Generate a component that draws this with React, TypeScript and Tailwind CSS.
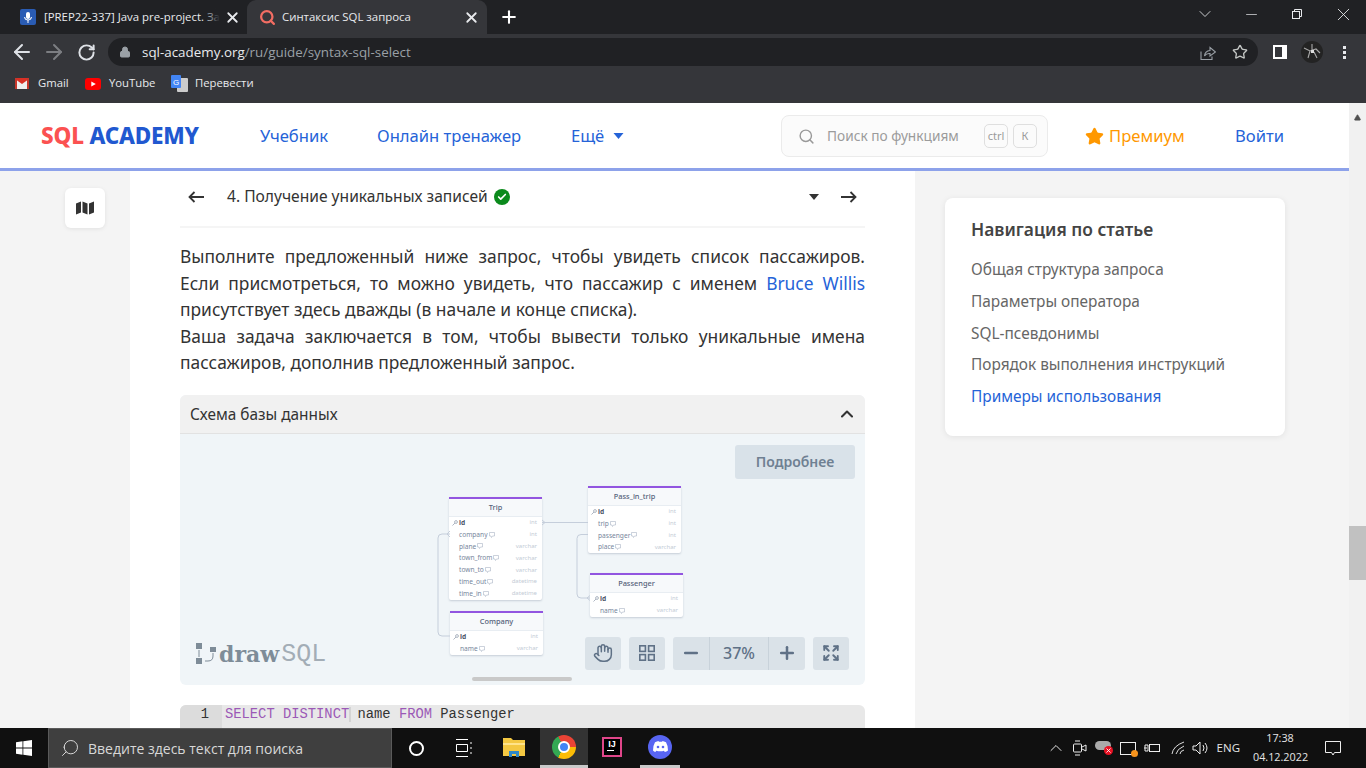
import React from "react";
import { X, Plus, ArrowLeft, ArrowRight, RotateCw, Lock, ChevronDown, Minus, Star, Search, Hand, ChevronUp, Expand, Check, Triangle } from "lucide-react";

const ui = { fontFamily: '"Open Sans","Noto Sans",sans-serif' };
const site = { fontFamily: '"Noto Sans","Open Sans",sans-serif' };

type Row = [string, string, boolean?];

function Bubble() {
  return (
    <svg width="6" height="6" viewBox="0 0 6 6" fill="none" stroke="#a9b4c4" strokeWidth="0.6" className="ml-[1px] shrink-0">
      <path d="M.5.5h5v3.500H3.500L2.500 5.500 2 4H.5z" />
    </svg>
  );
}

function Table({ name, rows, className }: { name: string; rows: Row[]; className: string }) {
  return (
    <div className={"absolute w-[93px] rounded-[2px] bg-white shadow-[0_1px_2px_rgba(100,116,139,0.3)] " + className}>
      <div className="flex h-[20px] items-center justify-center border-t-[2px] border-b border-t-[#9255e0] border-b-[#e8edf2] bg-[#f7f9fb] pt-[1px] text-[7.4px] font-medium text-[#56627a]">{name}</div>
      {rows.map(([c, t, pk]) => (
        <div key={c} className="relative flex h-[11.8px] items-center justify-between pl-[10px] pr-[5px] text-[6.6px] text-[#77869c]">
          {pk && (
            <svg width="6" height="6" viewBox="0 0 6 6" fill="none" stroke="#8b97a8" strokeWidth="0.7" className="absolute left-[3px] top-[3px]">
              <circle cx="4" cy="2" r="1.400" />
              <path d="M3 3L.5 5.500" />
            </svg>
          )}
          <span className={pk ? "flex items-center font-bold text-[#4b5568]" : "flex items-center"}>
            {c}
            {!pk && <Bubble />}
          </span>
          <span className="text-[6px] text-[#c3cbd6]">{t}</span>
        </div>
      ))}
    </div>
  );
}

function Line({ children, last }: { children: React.ReactNode; last?: boolean }) {
  return <div className={last ? "whitespace-nowrap" : "whitespace-nowrap [text-align:justify] [text-align-last:justify]"}>{children}</div>;
}

function LongArrow({ right }: { right?: boolean }) {
  return (
    <svg width="16" height="12" viewBox="0 0 16 12" fill="none" stroke="#333" strokeWidth="1.800" className={right ? "shrink-0 -scale-x-100" : "shrink-0"}>
      <path d="M1.500 6H16M6.500 1L1.500 6l5 5" />
    </svg>
  );
}

export default function App() {
  return (
    <div className="flex h-[768px] w-[1366px] flex-col overflow-hidden bg-[#f4f4f4]" style={ui}>
      {/* tab strip */}
      <div className="flex h-[34px] shrink-0 items-end bg-[#202124] pl-[8px] text-[11.4px] text-[#e8eaed]">
        <div className="flex h-[34px] w-[239px] items-center pl-[12px] pr-[6px]">
          <div className="mr-[8px] flex h-[16px] w-[16px] shrink-0 items-center justify-center rounded-[2px] bg-[#2a5cb4]">
            <svg width="10" height="11" viewBox="0 0 10 11" fill="#fff"><rect x="3" y="0" width="4" height="7" rx="2" /><path d="M1 5h1q.500 2.500 3 2.500T8 5h1q-.500 3-3.500 3.500V11h-1V8.500Q1.500 8 1 5z" /></svg>
          </div>
          <span className="relative whitespace-nowrap">
            [PREP22-337] Java pre-project. За
            <span className="absolute inset-y-0 right-0 w-[16px] bg-gradient-to-r from-transparent to-[#202124]" />
          </span>
          <X size={17} strokeWidth={2.5} className="ml-auto shrink-0" />
        </div>
        <div className="flex h-[34px] w-[240px] items-center rounded-t-[9px] bg-[#35363a] pl-[12px] pr-[7px]">
          <Search size={17} strokeWidth={3.2} className="mr-[6px] shrink-0 text-[#f26d63]" />
          <span className="whitespace-nowrap">Синтаксис SQL запроса</span>
          <X size={17} strokeWidth={2.5} className="ml-auto shrink-0" />
        </div>
        <Plus size={20} strokeWidth={2.5} className="mb-[7px] ml-[12px] text-white" />
        <div className="ml-auto flex h-[28px] self-start text-[#e8eaed]">
          <div className="flex w-[46px] items-center justify-center"><ChevronDown size={20} strokeWidth={1} /></div>
          <div className="flex w-[46px] items-center justify-center"><Minus size={17} strokeWidth={1} /></div>
          <div className="flex w-[46px] items-center justify-center">
            <svg width="10" height="10" viewBox="0 0 10 10" fill="none" stroke="currentColor"><rect x="0.5" y="2.500" width="7" height="7" /><path d="M2.500 2.500V.5h7v7h-2" /></svg>
          </div>
          <div className="flex w-[46px] items-center justify-center"><X size={21} strokeWidth={1} /></div>
        </div>
      </div>
      {/* toolbar */}
      <div className="flex h-[36px] shrink-0 items-center bg-[#35363a] pl-[6px]">
        <div className="flex w-[32px] justify-center"><ArrowLeft size={24} strokeWidth={2} className="text-[#dee1e6]" /></div>
        <div className="flex w-[32px] justify-center"><ArrowRight size={24} strokeWidth={2} className="text-[#7c7e82]" /></div>
        <div className="flex w-[32px] justify-center"><RotateCw size={19} strokeWidth={2.5} className="text-[#dee1e6]" /></div>
        <div className="ml-[6px] flex h-[28px] w-[1150px] shrink-0 items-center rounded-full bg-[#202124] pl-[11px] pr-[10px]">
          <Lock size={12} className="text-[#9aa0a6]" fill="currentColor" />
          <span className="ml-[11px] text-[13.4px] text-[#e8eaed]">sql-academy.org<span className="text-[#9aa0a6]">/ru/guide/syntax-sql-select</span></span>
          <svg width="16" height="15" viewBox="0 0 16 15" fill="none" stroke="#9aa0a6" strokeWidth="1.100" className="ml-auto">
            <path d="M1 6.500V14.500H12V11.500" />
            <path d="M4.500 11Q5 6 10 5.500V2.500L15.500 7 10 11V8.500Q6.500 8 4.500 11z" />
          </svg>
          <Star size={16} strokeWidth={2} className="ml-[16px] text-[#c4c7c5]" />
        </div>
        <div className="ml-[15px] h-[14px] w-[14px] shrink-0 border-[2px] border-r-[5px] border-white bg-[#35363a]" />
        <svg width="22" height="22" viewBox="0 0 22 22" className="ml-[14px] shrink-0">
          <circle cx="11" cy="11" r="11" fill="#232323" />
          <path d="M3 7l6 3 6-2 4 4M9 10l-2 7M13 11l3 6M11 3v7" stroke="#aaa" strokeWidth="1.100" fill="none" />
          <rect x="10" y="9" width="3" height="3" fill="#ddd" />
        </svg>
        <div className="ml-[20px] flex flex-col gap-[2px]"><i className="h-[3px] w-[3px] bg-[#e8eaed]" /><i className="h-[3px] w-[3px] bg-[#e8eaed]" /><i className="h-[3px] w-[3px] bg-[#e8eaed]" /></div>
      </div>
      {/* bookmarks */}
      <div className="flex h-[33px] shrink-0 items-center bg-[#35363a] pl-[15px] pb-[6px] text-[11.3px] text-[#e8eaed]">
        <svg width="14" height="11" viewBox="0 0 14 11" className="mr-[9px]"><rect width="14" height="11" rx="1" fill="#eee" /><path d="M0 1l7 5 7-5v-1H0z" fill="#d93025" /><path d="M0 0h2v11H0zM12 0h2v11h-2z" fill="#c5372c" /></svg>
        <span className="w-[47px]">Gmail</span>
        <svg width="16" height="12" viewBox="0 0 16 12" className="mr-[8px]"><rect width="16" height="12" rx="3" fill="#f00" /><path d="M6.300 3.400v5.200L10.800 6z" fill="#fff" /></svg>
        <span className="w-[62px]">YouTube</span>
        <svg width="17" height="17" viewBox="0 0 17 17" className="mr-[7px]"><rect x="6" y="3" width="11" height="14" rx="1" fill="#ccc" /><rect width="10" height="13" rx="1" fill="#4285f4" /><text x="2" y="10" fontSize="8" fill="#fff" fontFamily="Liberation Sans">G</text></svg>
        <span>Перевести</span>
      </div>
      {/* page */}
      <div className="relative flex min-h-0 flex-1 overflow-hidden" style={site}>
        <div className="flex min-w-0 flex-1 flex-col">
          <header className="flex h-[68px] shrink-0 items-center border-b-[3px] border-[#8da2ea] bg-white pl-[41px] pt-[1px] text-[16.6px] text-[#2563d8]">
            <div className="w-[219px] shrink-0 whitespace-nowrap text-[22.5px] font-extrabold tracking-[-0.2px]"><span className="text-[#fb5151]">SQL</span> <span className="text-[#2158d0]">ACADEMY</span></div>
            <span className="w-[117px] shrink-0">Учебник</span>
            <span className="w-[194px] shrink-0">Онлайн тренажер</span>
            <span className="w-[42px] shrink-0">Ещё</span>
            <svg width="11" height="6" viewBox="0 0 10 6" className="shrink-0"><path d="M0 0h10L5 6z" fill="currentColor" /></svg>
            <div className="ml-[157px] flex h-[42px] w-[267px] shrink-0 items-center rounded-[8px] border border-[#ebebeb] bg-[#fbfbfb] pl-[16px] pr-[10px] text-[13.7px] text-[#9b9b9b]">
              <Search size={17} className="text-[#999]" />
              <span className="ml-[12px] whitespace-nowrap">Поиск по функциям</span>
              <span className="ml-auto flex h-[24px] w-[24px] items-center justify-center rounded-[5px] border border-[#dfdfdf] text-[11px]">ctrl</span>
              <span className="ml-[5px] flex h-[24px] w-[24px] items-center justify-center rounded-[5px] border border-[#dfdfdf] text-[11px]">К</span>
            </div>
            <Star size={19} className="ml-[37px] shrink-0 text-[#ff9800]" fill="currentColor" />
            <span className="ml-[5px] w-[126px] shrink-0 text-[#ff9800]">Премиум</span>
            <span className="shrink-0">Войти</span>
          </header>
          <div className="flex min-h-0 flex-1">
            <div className="w-[130px] shrink-0 pl-[65px] pt-[17px]">
              <div className="flex h-[40px] w-[40px] items-center justify-center rounded-[6px] bg-white shadow-[0_1px_4px_rgba(0,0,0,0.08)]">
                <svg width="18" height="14" viewBox="0 0 18 14" fill="#333"><path d="M0 2.500L5 .5V11.500L0 13.500zM6.500 .5L11.500 2.500V13.500L6.500 11.500zM13 2.500L18 .5V11.500L13 13.500z" /></svg>
              </div>
            </div>
            <main className="h-full w-[785px] shrink-0 bg-white px-[50px]">
              <div className="flex h-[57px] items-center border-b-2 border-[#f5f5f5] px-[8px] pb-[4px] text-[15.6px] text-[#333]">
                <LongArrow />
                <span className="ml-[23px]">4. Получение уникальных записей</span>
                <span className="ml-[6px] flex h-[16px] w-[16px] items-center justify-center rounded-full bg-[#0b8a1c]"><Check size={10} strokeWidth={4} className="text-white" /></span>
                <svg width="10" height="6" viewBox="0 0 10 6" className="ml-auto"><path d="M0 0h10L5 6z" fill="#333" /></svg>
                <span className="ml-[22px]"><LongArrow right /></span>
              </div>
              <div className="mt-[15px] text-[17.4px] leading-[26.6px] text-[#333]">
                <Line>Выполните предложенный ниже запрос, чтобы увидеть список пассажиров.</Line>
                <Line>Если присмотреться, то можно увидеть, что пассажир с именем <span className="text-[#2563d8]">Bruce Willis</span></Line>
                <Line last>присутствует здесь дважды (в начале и конце списка).</Line>
                <Line>Ваша задача заключается в том, чтобы вывести только уникальные имена</Line>
                <Line last>пассажиров, дополнив предложенный запрос.</Line>
              </div>
              <div className="mt-[19px] h-[290px] overflow-hidden rounded-[6px] bg-[#f0f5f8]">
                <div className="flex h-[39px] items-center justify-between border-b border-[#e2e2e2] bg-[#f1f1f1] pl-[10px] pr-[8px] pt-[1px] text-[15.4px] text-[#333]">
                  Схема базы данных
                  <ChevronUp size={20} strokeWidth={2.5} />
                </div>
                <div className="relative h-[251px]">
                  <div className="absolute right-[10px] top-[11px] flex h-[34px] w-[120px] items-center justify-center rounded-[3px] bg-[#d9e2e9] text-[14px] font-semibold text-[#6f8092]">Подробнее</div>
                  <Table name="Trip" className="left-[269px] top-[63px]" rows={[["id","int",true],["company","int"],["plane","varchar"],["town_from","varchar"],["town_to","varchar"],["time_out","datetime"],["time_in","datetime"]]} />
                  <Table name="Pass_in_trip" className="left-[408px] top-[52px]" rows={[["id","int",true],["trip","int"],["passenger","int"],["place","varchar"]]} />
                  <Table name="Passenger" className="left-[410px] top-[139px]" rows={[["id","int",true],["name","varchar"]]} />
                  <Table name="Company" className="left-[270px] top-[177px]" rows={[["id","int",true],["name","varchar"]]} />
                  <svg className="absolute left-[255px] top-[85px]" width="160" height="125" fill="none" stroke="#c5cedb" strokeWidth="1">
                    <path d="M15 15H7q-4 0-4 4v94q0 4 4 4h8" />
                    <path d="M15 12l-3 3 3 3" />
                    <path d="M107 3.500h46" />
                    <path d="M107 1l3 2.500-3 2.500" />
                    <path d="M153 15.500h-7q-4 0-4 4v55.500q0 4 4 4h9" />
                    <path d="M155 76.500l-3 2.500 3 2.500" />
                  </svg>
                  <div className="absolute bottom-[18px] left-[15px] flex items-center">
                    <svg width="22" height="24" viewBox="0 0 22 24" fill="#7e8c98" className="mr-[2px]"><rect x="1" y="1" width="6" height="6" /><rect x="1" y="16" width="6" height="6" /><rect x="15" y="5" width="6" height="5" /><path d="M4 8v7M18 11v3q0 5-5 5h-3" fill="none" stroke="#7e8c98" /></svg>
                    <span className="text-[22px] font-bold leading-none text-[#7e8c98]" style={{ fontFamily: '"DejaVu Serif",serif' }}>draw</span>
                    <span className="ml-[2px] text-[25px] leading-none text-[#a3adb6]" style={{ fontFamily: '"Liberation Mono",monospace' }}>SQL</span>
                  </div>
                  <div className="absolute left-[405px] top-[203px] flex h-[33px] items-center text-[#5f7186]">
                    <div className="flex h-[33px] w-[36px] items-center justify-center rounded-[3px] bg-[#dae2e8]"><Hand size={20} strokeWidth={1.8} /></div>
                    <div className="ml-[8px] flex h-[33px] w-[36px] items-center justify-center rounded-[3px] bg-[#dae2e8]">
                      <svg width="16" height="16" viewBox="0 0 16 16" fill="none" stroke="currentColor" strokeWidth="1.600"><rect x=".8" y=".8" width="5.600" height="5.600" /><rect x="9.600" y=".8" width="5.600" height="5.600" /><rect x=".8" y="9.600" width="5.600" height="5.600" /><rect x="9.600" y="9.600" width="5.600" height="5.600" /></svg>
                    </div>
                    <div className="ml-[8px] flex h-[33px] w-[132px] items-center rounded-[3px] bg-[#dae2e8]">
                      <div className="flex h-full w-[37px] items-center justify-center border-r border-[#c8d2da]"><Minus size={20} strokeWidth={3} /></div>
                      <div className="flex h-full w-[59px] items-center justify-center border-r border-[#c8d2da] text-[16px] font-medium">37%</div>
                      <div className="flex h-full w-[36px] items-center justify-center"><Plus size={20} strokeWidth={3} /></div>
                    </div>
                    <div className="ml-[8px] flex h-[33px] w-[36px] items-center justify-center rounded-[3px] bg-[#dae2e8]"><Expand size={18} strokeWidth={2.5} /></div>
                  </div>
                  <div className="absolute bottom-[4px] left-[292px] h-[4px] w-[100px] rounded-full bg-[#c9c9c9]" />
                </div>
              </div>
              <div className="mt-[20px] flex h-[24px] items-start rounded-t-[6px] bg-[#e8e8e8] pt-[0px] text-[13.8px] leading-[20px]" style={{ fontFamily: '"Liberation Mono",monospace' }}>
                <div className="h-full w-[42px] rounded-tl-[6px] bg-[#dcdcdc] pr-[13px] text-right text-[#333]">1</div>
                <div className="pl-[3px] text-[#333]"><span className="text-[#9b59b6] shadow-[2px_0_0_#d4d4d4]">SELECT DISTINCT</span> name <span className="text-[#9b59b6]">FROM</span> Passenger</div>
              </div>
            </main>
            <aside className="flex-1 pl-[30px] pt-[27px]">
              <div className="h-[238px] w-[340px] rounded-[8px] bg-white px-[26px] pt-[19px] text-[15.4px] text-[#666] shadow-[0_1px_6px_rgba(0,0,0,0.08)]">
                <div className="mb-[12px] text-[17.4px] font-semibold leading-[25px] text-[#444]">Навигация по статье</div>
                <div className="flex h-[32px] items-center">Общая структура запроса</div>
                <div className="flex h-[32px] items-center">Параметры оператора</div>
                <div className="flex h-[31px] items-center">SQL-псевдонимы</div>
                <div className="flex h-[32px] items-center">Порядок выполнения инструкций</div>
                <div className="flex h-[32px] items-center text-[#2563d8]">Примеры использования</div>
              </div>
            </aside>
          </div>
        </div>
        {/* scrollbar */}
        <div className="flex w-[17px] shrink-0 flex-col items-center bg-[#f1f1f1] pt-[11px]">
          <Triangle size={7} fill="#505050" stroke="#505050" />
          <div className="mt-[405px] h-[54px] w-full bg-[#c1c1c1]" />
        </div>
      </div>
      {/* taskbar */}
      <div className="flex h-[40px] shrink-0 items-center bg-[#101010] text-[#e6e6e6]">
        <div className="flex w-[48px] justify-center">
          <svg width="16" height="16" viewBox="0 0 16 16" fill="#fff"><path d="M0 2.200l6.500-.9v6.300H0zM7.300 1.200L16 0v7.600H7.300zM0 8.400h6.500v6.300L0 13.800zM7.300 8.400H16V16l-8.700-1.200z" /></svg>
        </div>
        <div className="flex h-[40px] w-[344px] items-center border border-[#5a5a5a] bg-[#3f3f3f] pl-[11px] text-[14px] text-[#d8d8d8]">
          <Search size={20} strokeWidth={1.2} className="-scale-x-100" />
          <span className="ml-[8px]">Введите здесь текст для поиска</span>
        </div>
        <div className="flex w-[48px] justify-center"><div className="h-[15px] w-[15px] rounded-full border-2 border-white" /></div>
        <div className="flex w-[48px] justify-center">
          <svg width="17" height="18" viewBox="0 0 17 18" fill="none" stroke="#fff"><path d="M0 .5h12M0 17.500h12M.5 5.500h11v7H.5zM15 3v2M15 8v2M15 13v2" /></svg>
        </div>
        <div className="flex w-[52px] justify-center">
          <svg width="22" height="20" viewBox="0 0 22 20"><path d="M0 0h8l2 2h12v16H0z" fill="#f4c842" /><path d="M0 5h22v2H0z" fill="#ffe38a" /><path d="M6 19v-6h10v6h-3v-3H9v3z" fill="#2f88c8" /></svg>
        </div>
        <div className="flex h-[40px] w-[48px] items-center justify-center border-b-[3px] border-[#c9c9c9] bg-[#333]">
          <div className="h-[24px] w-[24px] rounded-full bg-[conic-gradient(#ea4335_0_25%,#fbbc05_25%_58%,#34a853_58%_92%,#ea4335_92%)] p-[6px]"><div className="h-full w-full rounded-full border-2 border-white bg-[#4285f4]" /></div>
        </div>
        <div className="flex h-[40px] w-[48px] items-center justify-center pb-[3px]">
          <div className="flex h-[20px] w-[20px] flex-col items-center justify-start border-2 border-[#e0468a] bg-black text-[9px] font-bold leading-[11px] text-white" style={{ fontFamily: '"Liberation Sans",sans-serif' }}>
            IJ
            <div className="mr-[4px] h-[1px] w-[7px] bg-white" />
          </div>
        </div>
        <div className="flex h-[40px] w-[48px] items-center justify-center">
          <div className="flex h-[40px] w-[40px] items-center justify-center border-b-[3px] border-[#c9c9c9]">
            <div className="flex h-[24px] w-[24px] items-center justify-center rounded-full bg-[#5865f2]">
              <svg width="15" height="11" viewBox="0 0 15 11"><path d="M2 1.200Q4 .2 5.500 0l.4.8h3.200l.4-.8q1.500.2 3.500 1.200 2 3.300 2 8.200-1.500 1.200-3.200 1.600l-.8-1.300q-3.500 1-7.800 0l-.8 1.300Q1 10.600 0 9.400q0-4.900 2-8.200z" fill="#fff" /><circle cx="5" cy="6" r="1.300" fill="#5865f2" /><circle cx="10" cy="6" r="1.300" fill="#5865f2" /></svg>
            </div>
          </div>
        </div>
        <div className="ml-auto flex items-center text-[11.5px]">
          <div className="flex w-[24px] justify-center"><ChevronUp size={20} strokeWidth={1.2} /></div>
          <div className="flex w-[24px] justify-center">
            <svg width="14" height="16" viewBox="0 0 14 16" fill="none" stroke="#eee"><rect x=".5" y="4" width="8" height="8" rx="1" /><path d="M9 7l4-2v6l-4-2M2 1h5M2 15h5" /></svg>
          </div>
          <div className="flex w-[24px] justify-center">
            <div className="relative h-[14px] w-[18px]"><div className="h-[9px] w-[16px] rounded-full bg-[#aaa]" /><div className="absolute bottom-0 right-0 flex h-[9px] w-[9px] items-center justify-center rounded-full bg-[#e81123]"><X size={7} strokeWidth={3} className="text-white" /></div></div>
          </div>
          <div className="flex w-[24px] justify-center">
            <div className="relative h-[13px] w-[16px] border border-[#eee]"><div className="absolute -bottom-[3px] -right-[3px] h-[7px] w-[7px] rounded-full bg-[#f7941d]" /></div>
          </div>
          <div className="flex w-[24px] justify-center">
            <svg width="16" height="12" viewBox="0 0 16 12" fill="none" stroke="#eee"><rect x="5.500" y="2.500" width="10" height="7" /><path d="M0 6h3M1 3h3v6H1z" /></svg>
          </div>
          <div className="ml-[2px] flex w-[26px] justify-center">
            <svg width="16" height="14" viewBox="0 0 16 14" fill="none" stroke="#ddd"><path d="M1 13Q2 5 13 1M5 13q1-5 8-8M9 13q0-3 4-4" /></svg>
          </div>
          <div className="-ml-[2px] flex w-[22px] justify-center">
            <svg width="17" height="14" viewBox="0 0 17 14" fill="none" stroke="#eee"><path d="M1 5h3l4-4v12l-4-4H1zM11 4q2 3 0 6M13 2q4 5 0 10" /></svg>
          </div>
          <span className="ml-[5px]">ENG</span>
          <div className="ml-[13px] w-[54px] pb-[2px] text-center text-[10.8px] leading-[19px]"><div>17:38</div><div>04.12.2022</div></div>
          <svg width="16" height="15" viewBox="0 0 16 15" fill="none" stroke="#eee" className="ml-[18px] mr-[25px]"><path d="M.5.5h15v11h-6l-1.500 2.500-1.500-2.500h-6z" /></svg>
        </div>
      </div>
    </div>
  );
}
